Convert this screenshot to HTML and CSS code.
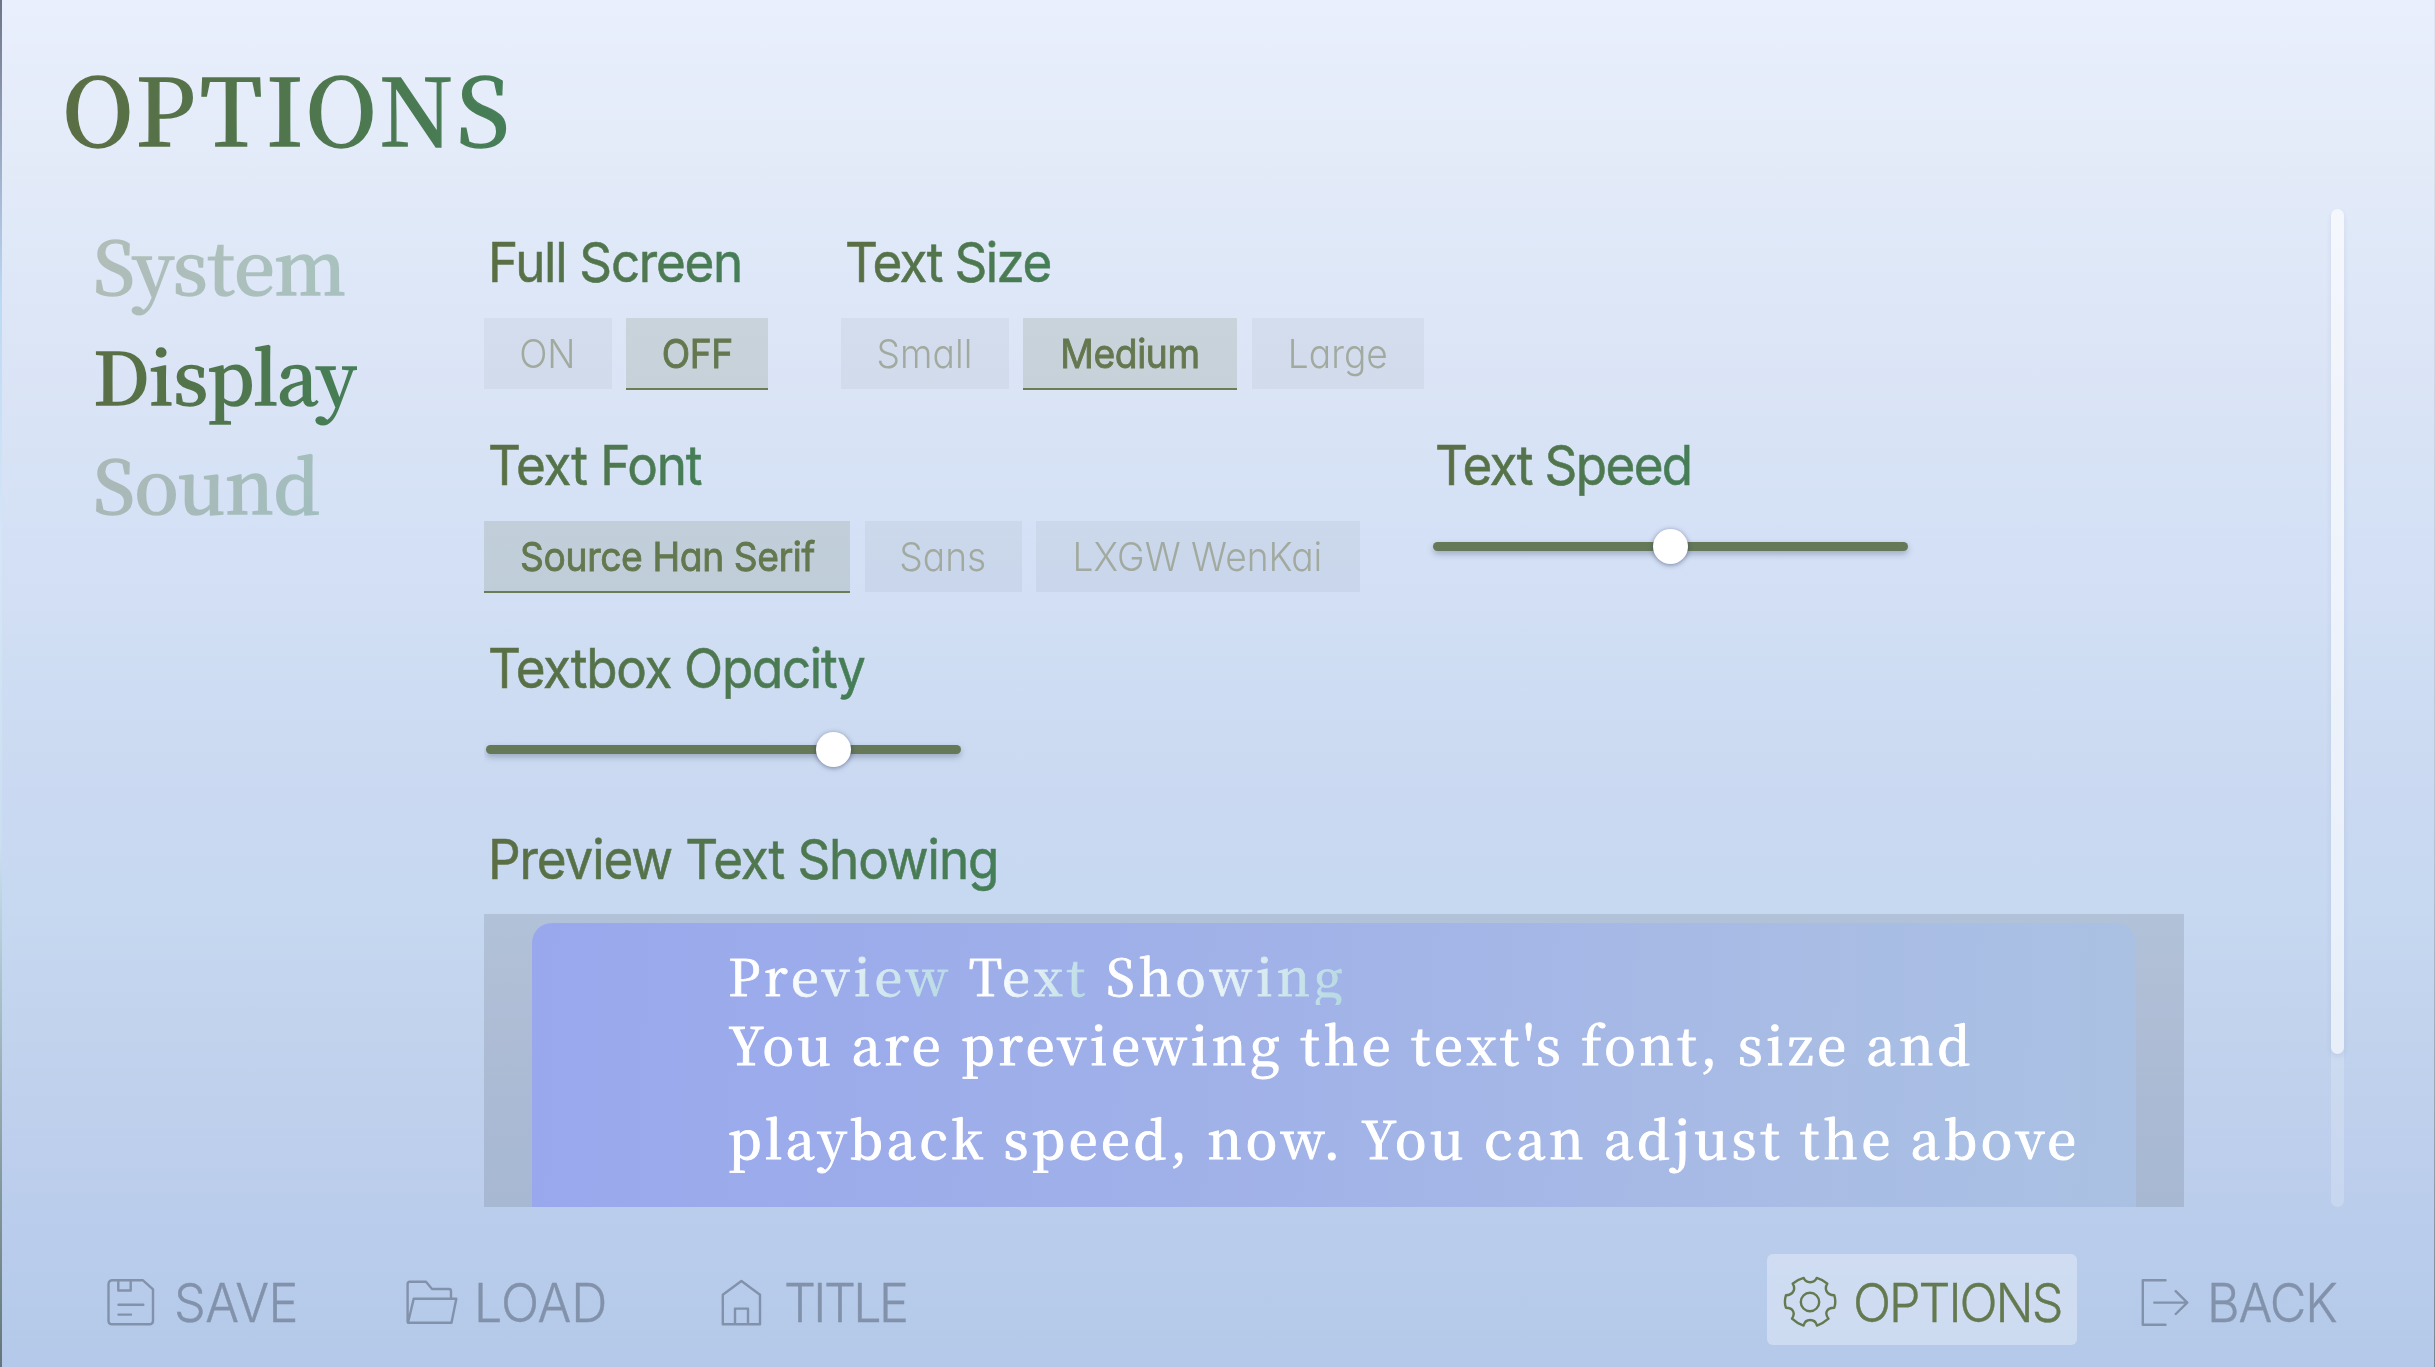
FILE: index.html
```
<!DOCTYPE html>
<html lang="en">
<head>
<meta charset="utf-8">
<title>Options</title>
<link rel="stylesheet" href="styles.css">
</head>
<body>
<div class="screen">
  <header class="header"><h1 class="title">OPTIONS</h1></header>

  <main class="main">
    <nav class="tabs">
      <a class="tab">System</a>
      <a class="tab tab--active">Display</a>
      <a class="tab">Sound</a>
    </nav>

    <div class="content">
      <div class="row">
        <section class="group">
          <h2 class="label"><span>Full Screen</span></h2>
          <div class="choices">
            <button class="choice w-on"><span>ON</span></button>
            <button class="choice choice--active w-off"><span>OFF</span></button>
          </div>
        </section>
        <section class="group">
          <h2 class="label"><span class="tight">Text Size</span></h2>
          <div class="choices">
            <button class="choice w-small"><span>Small</span></button>
            <button class="choice choice--active w-medium"><span>Medium</span></button>
            <button class="choice w-large"><span>Large</span></button>
          </div>
        </section>
      </div>

      <div class="row">
        <section class="group">
          <h2 class="label"><span class="loose">Text Font</span></h2>
          <div class="choices">
            <button class="choice choice--active w-serif"><span>Source Han Serif</span></button>
            <button class="choice w-sans"><span>Sans</span></button>
            <button class="choice w-kai"><span>LXGW WenKai</span></button>
          </div>
        </section>
        <section class="group group--speed">
          <h2 class="label"><span class="tight">Text Speed</span></h2>
          <div class="slider"><i class="thumb" style="left:50%"></i></div>
        </section>
      </div>

      <div class="row row--last">
        <section class="group">
          <h2 class="label"><span>Textbox Opacity</span></h2>
          <div class="slider"><i class="thumb" style="left:73.2%"></i></div>
        </section>
      </div>

      <section class="preview-group">
        <h2 class="label"><span class="loose">Preview Text Showing</span></h2>
        <div class="preview">
          <div class="textbox">
            <div class="speaker"><span>Preview</span> <span>Text</span> <span>Showing</span></div>
            <p class="speech">You are previewing the text's font, size and<br>playback speed, now. You can adjust the above</p>
          </div>
        </div>
      </section>
    </div>

    <div class="scrollbar"><div class="scrollbar-thumb"></div></div>
  </main>

  <footer class="footer">
    <a class="action action--save">
      <svg width="50" height="50" viewBox="0 0 50 50"><path d="M6.5 3.3H37L47 12.3V43.5Q47 47.3 43.2 47.3H6.3Q2.5 47.3 2.5 43.5V7.3Q2.5 3.3 6.5 3.3ZM12.3 4V13.5H24.7V4M12.5 27.7H37.3M12.5 37.6H25"/></svg>
      <span>SAVE</span>
    </a>
    <a class="action action--load">
      <svg width="54" height="50" viewBox="0 0 54 50"><path d="M2.6 45V6.8Q2.6 4.7 4.7 4.7H21L27 12H43.8Q46 12 46 14.2V21.5M8.7 21.7H51.3L46.5 45.8H3Z"/></svg>
      <span>LOAD</span>
    </a>
    <a class="action action--title">
      <svg width="44" height="50" viewBox="0 0 44 50"><path d="M2.8 47.2V17.7L21.4 4L40 17.7V47.2ZM15 47V31.6H28V47"/></svg>
      <span>TITLE</span>
    </a>
    <a class="action action--options">
      <svg width="54" height="54" viewBox="0 0 54 54"><circle cx="27" cy="27" r="9.2"/><path d="M20.7 2.9C22.5 8.6 31.8 8.6 33.7 2.9Q39.5 4.5 44.3 8.7C41 14 43.5 20 51.2 20.2Q53.4 27 51.2 32.8C43.5 33 41.2 38 45.5 43.7Q40 48.5 34 50.6C32 43.2 22.3 43.2 20.6 50.6Q14 48.5 9 43.7C12.6 38 10.3 33 3 32.8Q.8 27 3 20.2C10.3 20 13 14 9.7 8.7Q14.5 4.5 20.7 2.9Z"/></svg>
      <span>OPTIONS</span>
    </a>
    <a class="action action--back">
      <svg width="50" height="50" viewBox="0 0 50 50"><path d="M25.5 3.3H2.8V47.7H25.5M14.3 25.6H47.3M35.7 14.2L47.3 25.6L35.7 37"/></svg>
      <span>BACK</span>
    </a>
  </footer>
</div>
</body>
</html>
```
FILE: styles.css
```
* { box-sizing: border-box; }

body {
  margin: 0;
  font-family: Inter, "Noto Sans", sans-serif;
  font-feature-settings: "cv11";
}

.screen {
  position: relative;
  width: 2435px;
  height: 1367px;
  overflow: hidden;
  display: flex;
  flex-direction: column;
  background: linear-gradient(#e9effc 0, #e4ebf9 140px, #e0e9f8 230px, #dde6f7 320px, #d8e3f5 430px, #d2dff5 600px, #cddcf2 700px, #cad9f1 800px, #c7d8f1 900px, #c1d2ed 1050px, #b9cceb 1240px, #b4c9e9 100%);
}

.screen::before,
.screen::after {
  content: "";
  position: absolute;
  top: 0;
  bottom: 0;
  width: 2px;
}
.screen::before {
  left: 0;
  background: linear-gradient(#6d7486, #a9bcd8 15%, #bcdaf4 22%, #d5e6f8 40%, #c9dfee 62%, #8fa5a8 82%, #64767a);
}
.screen::after {
  right: 0;
  width: 1px;
  background: linear-gradient(#dfe7f2, #b9c6d8 60%, #7c8594);
}

.title, .tab, .textbox {
  font-family: "Noto Serif CJK SC", "Liberation Serif", serif;
  font-weight: 500;
}

.title, .tab, .label span {
  color: transparent;
  background: linear-gradient(90deg, #5b6e44, #457e57);
  -webkit-background-clip: text;
  background-clip: text;
}

.header { height: 209px; padding: 56px 0 0 62px; }
.title {
  width: max-content;
  margin: 0;
  font-size: 93px;
  line-height: 100px;
  letter-spacing: 3.6px;
  -webkit-text-stroke: 1.4px transparent;
}

.main { display: flex; height: 998px; }

.tabs { width: 484px; padding-left: 93px; }
.tab {
  display: block;
  width: max-content;
  font-size: 73px;
  line-height: 109.6px;
  letter-spacing: -0.5px;
  -webkit-text-stroke: 1.6px transparent;
  opacity: 0.35;
}
.tab--active { opacity: 1; }

.content { width: 1700px; padding-top: 23px; overflow: hidden; }
.row { display: flex; gap: 73px; height: 158px; margin-bottom: 45px; }
.row--last { margin-bottom: 33px; }
.group { display: flex; flex-direction: column; }
.group--speed { margin-left: -1.5px; }

.label {
  height: 60px;
  margin: 0 0 26px;
  padding-left: 4px;
  font-size: 55px;
  font-weight: 400;
  line-height: 60px;
  letter-spacing: -1.4px;
  white-space: nowrap;
  -webkit-text-stroke: 0.6px transparent;
}
.label span {
  display: inline-block;
  height: 66px;
  transform: scaleX(0.93);
  transform-origin: left;
}
.label .tight { letter-spacing: -1.75px; }
.label .loose { letter-spacing: -1.2px; }

.choices { display: flex; gap: 14.5px; }
.choice {
  display: flex;
  justify-content: center;
  height: 71px;
  padding: 0;
  border: 0;
  background: rgba(0, 0, 0, 0.04);
  font-family: inherit;
  font-feature-settings: inherit;
  font-size: 40px;
  font-weight: 300;
  line-height: 71px;
  white-space: nowrap;
  color: #a2aaa0;
}
.choice span { transform: scaleX(0.93); }
.choice--active {
  height: 72px;
  background: rgba(100, 120, 85, 0.17);
  border-bottom: 2px solid #6a7d55;
  font-weight: 400;
  letter-spacing: -0.4px;
  color: #64784f;
  -webkit-text-stroke: 0.9px #64784f;
}
.w-on { width: 127.5px; }
.w-off { width: 142px; }
.w-small { width: 167.5px; }
.w-medium { width: 214px; }
.w-large { width: 172.5px; }
.w-serif { width: 366px; }
.w-sans { width: 157px; }
.w-kai { width: 323.5px; }

.slider {
  position: relative;
  width: 475px;
  height: 9.5px;
  margin: 20.5px 0 0 1.5px;
  border-radius: 5px;
  background: #657958;
  box-shadow: 0 3px 6px rgba(60, 70, 100, 0.35);
}
.thumb {
  position: absolute;
  top: -13px;
  width: 35px;
  height: 35px;
  margin-left: -17.5px;
  border-radius: 50%;
  background: #fff;
  box-shadow: 0 1px 5px rgba(30, 40, 80, 0.5);
}

.preview-group .label { margin-bottom: 25px; }
.preview {
  height: 293px;
  padding: 9px 48px 0;
  background: rgba(0, 0, 0, 0.1);
}
.textbox {
  height: 284px;
  padding: 20px 0 0 196px;
  border-radius: 20px 20px 0 0;
  background: linear-gradient(92deg, #99a8ed, #9dadea 25%, #a2b3e8 50%, #a8bbe5 75%, #aac1e3);
  color: #fff;
  white-space: nowrap;
}
.speaker {
  height: 62px;
  font-size: 50px;
  line-height: 62px;
  letter-spacing: 3.9px;
}
.speaker span {
  display: inline-block;
  height: 62px;
  color: transparent;
  background: linear-gradient(105deg, #fff 25%, #b4d8e2);
  -webkit-background-clip: text;
  background-clip: text;
  -webkit-text-stroke: 0.8px transparent;
}
.speech {
  margin: -9px 0 0;
  font-size: 52px;
  line-height: 93.5px;
  letter-spacing: 3.55px;
  -webkit-text-stroke: 0.9px #fff;
}

.scrollbar {
  width: 13px;
  height: 998px;
  margin-left: 146.5px;
  border-radius: 7px;
  background: rgba(255, 255, 255, 0.2);
}
.scrollbar-thumb {
  height: 845px;
  border-radius: 7px;
  background: rgba(255, 255, 255, 0.55);
  box-shadow: 0 3px 5px rgba(80, 100, 150, 0.12);
}

.footer {
  display: flex;
  height: 91px;
  margin-top: 47px;
  padding-left: 106px;
}
.action {
  display: flex;
  align-items: center;
  padding-top: 5px;
  color: #8292ab;
  font-size: 54px;
  font-weight: 300;
  white-space: nowrap;
}
.action svg {
  flex: none;
  fill: none;
  stroke: currentColor;
  stroke-width: 2.4;
  stroke-linecap: round;
  stroke-linejoin: round;
}
.action span {
  transform: scaleX(0.93);
  transform-origin: left;
  -webkit-text-stroke: 0.4px currentColor;
}
.action--save { width: 299px; gap: 18px; letter-spacing: -0.5px; }
.action--load { width: 315px; gap: 15px; }
.action--title { width: 1047px; gap: 20px; letter-spacing: -2.8px; }
.action--options {
  width: 310px;
  padding-left: 16px;
  gap: 16px;
  border-radius: 6px;
  background: rgba(255, 255, 255, 0.33);
  color: #64794f;
  letter-spacing: -2.2px;
}
.action--back { margin-left: 63px; gap: 17px; letter-spacing: -1.2px; }
```
